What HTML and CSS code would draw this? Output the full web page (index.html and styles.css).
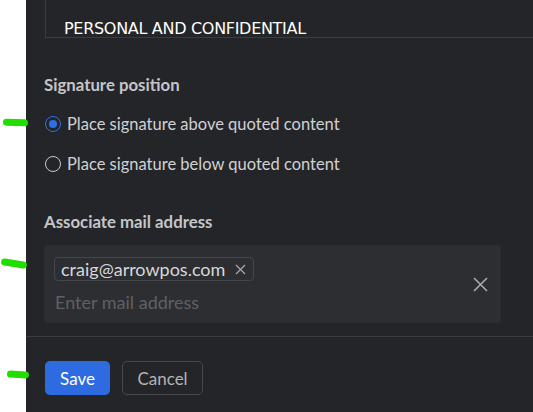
FILE: index.html
```html
<!DOCTYPE html>
<html>
<head>
<meta charset="utf-8">
<link rel="stylesheet" href="styles.css">
</head>
<body>
<div class="page">
  <div class="gutter">
    <span class="mark mark-1"></span>
    <span class="mark mark-2"></span>
    <span class="mark mark-3"></span>
  </div>
  <div class="panel">
    <div class="body">
      <div class="preview"><span class="preview-text">PERSONAL AND CONFIDENTIAL</span></div>
      <div class="section section-pos">
        <div class="label">Signature position</div>
        <label class="radio radio-first"><span class="dot checked"></span><span>Place signature above quoted content</span></label>
        <label class="radio"><span class="dot"></span><span>Place signature below quoted content</span></label>
      </div>
      <div class="section section-mail">
        <div class="label">Associate mail address</div>
        <div class="field">
          <div class="field-main">
            <span class="chip">craig@arrowpos.com<svg class="chip-x" width="11" height="11" viewBox="0 0 11 11"><path d="M1 1L10 10M10 1L1 10" stroke="#a9aaad" stroke-width="1.2"/></svg></span>
            <div class="placeholder">Enter mail address</div>
          </div>
          <svg class="clear" width="15" height="15" viewBox="0 0 15 15"><path d="M1 1L14 14M14 1L1 14" stroke="#a9aaad" stroke-width="1.6"/></svg>
        </div>
      </div>
    </div>
    <div class="footer">
      <button class="btn btn-primary">Save</button>
      <button class="btn btn-ghost">Cancel</button>
    </div>
  </div>
</div>
</body>
</html>
```

FILE: styles.css
```css
html, body {
  margin: 0;
  padding: 0;
  background: #ffffff;
}
.page {
  display: flex;
  width: 533px;
  height: 412px;
  overflow: hidden;
  font-family: Lato, "Open Sans", sans-serif;
}
.gutter {
  width: 26px;
  flex: none;
  position: relative;
  background: #ffffff;
}
.mark {
  position: absolute;
  background: #22dd00;
  border-radius: 4px;
  height: 7px;
}
.mark-1 { left: 3px; top: 119px; width: 25px; transform: rotate(2deg); }
.mark-2 { left: 1px; top: 260px; width: 26px; transform: rotate(9deg); }
.mark-3 { left: 7px; top: 371px; width: 22px; transform: rotate(3deg); }
.panel {
  flex: 1;
  background: #242528;
  display: flex;
  flex-direction: column;
}
.body {
  padding-left: 18px;
  padding-right: 32px;
}
.preview {
  height: 38px;
  border-left: 1px solid #3b3c40;
  border-bottom: 1px solid #3b3c40;
  margin-right: -32px;
  box-sizing: border-box;
  margin-left: 1px;
  padding-left: 18px;
  padding-top: 20px;
  overflow: hidden;
}
.preview-text {
  display: block;
  font-family: "DejaVu Sans", Verdana, sans-serif;
  font-size: 16px;
  color: #ffffff;
  line-height: 18px;
  letter-spacing: -0.3px;
  white-space: nowrap;
}
.section-pos { padding-top: 37px; }
.label {
  font-weight: 700;
  font-size: 16.8px;
  color: #c4c5c8;
  line-height: 20px;
}
.radio {
  display: flex;
  align-items: center;
  gap: 6px;
  font-size: 16.5px;
  color: #d0d1d4;
  line-height: 20px;
  margin-top: 20px;
}
.radio-first { margin-top: 19px; }
.dot {
  width: 16px;
  height: 16px;
  border: 1.5px solid #c8c9cc;
  border-radius: 50%;
  box-sizing: border-box;
  flex: none;
  position: relative;
  margin-left: 1px;
}
.dot.checked {
  border-color: #2f6fe6;
}
.dot.checked::after {
  content: "";
  position: absolute;
  left: 2.5px; top: 2.5px;
  width: 8px; height: 8px;
  border-radius: 50%;
  background: #2f6fe6;
}
.section-mail { padding-top: 38px; }
.field {
  margin-top: 13px;
  background: #2d2e32;
  border-radius: 4px;
  height: 78px;
  box-sizing: border-box;
  padding: 0 13px 0 10px;
  display: flex;
  align-items: center;
}
.field-main {
  flex: 1;
  align-self: flex-start;
  padding-top: 12px;
}
.chip {
  display: inline-flex;
  align-items: center;
  gap: 10px;
  border: 1px solid #45464b;
  border-radius: 4px;
  height: 24px;
  box-sizing: border-box;
  padding: 0 7px 0 6px;
  font-size: 18px;
  color: #d6d7da;
}
.placeholder {
  margin-top: 10px;
  font-size: 18px;
  color: #5f6065;
  line-height: 22px;
  padding-left: 1px;
}
.clear { flex: none; }
.footer {
  margin-top: 13px;
  border-top: 1px solid #3b3c40;
  padding: 24px 19px 0;
  display: flex;
  gap: 12px;
}
.btn {
  font-family: Lato, "Open Sans", sans-serif;
  font-size: 17px;
  height: 34px;
  border-radius: 5px;
  box-sizing: border-box;
  padding: 0;
}
.btn-primary {
  background: #2e6be0;
  color: #ffffff;
  border: none;
  width: 65px;
}
.btn-ghost {
  background: transparent;
  color: #b2b3b6;
  border: 1px solid #47484c;
  width: 81px;
}
```
